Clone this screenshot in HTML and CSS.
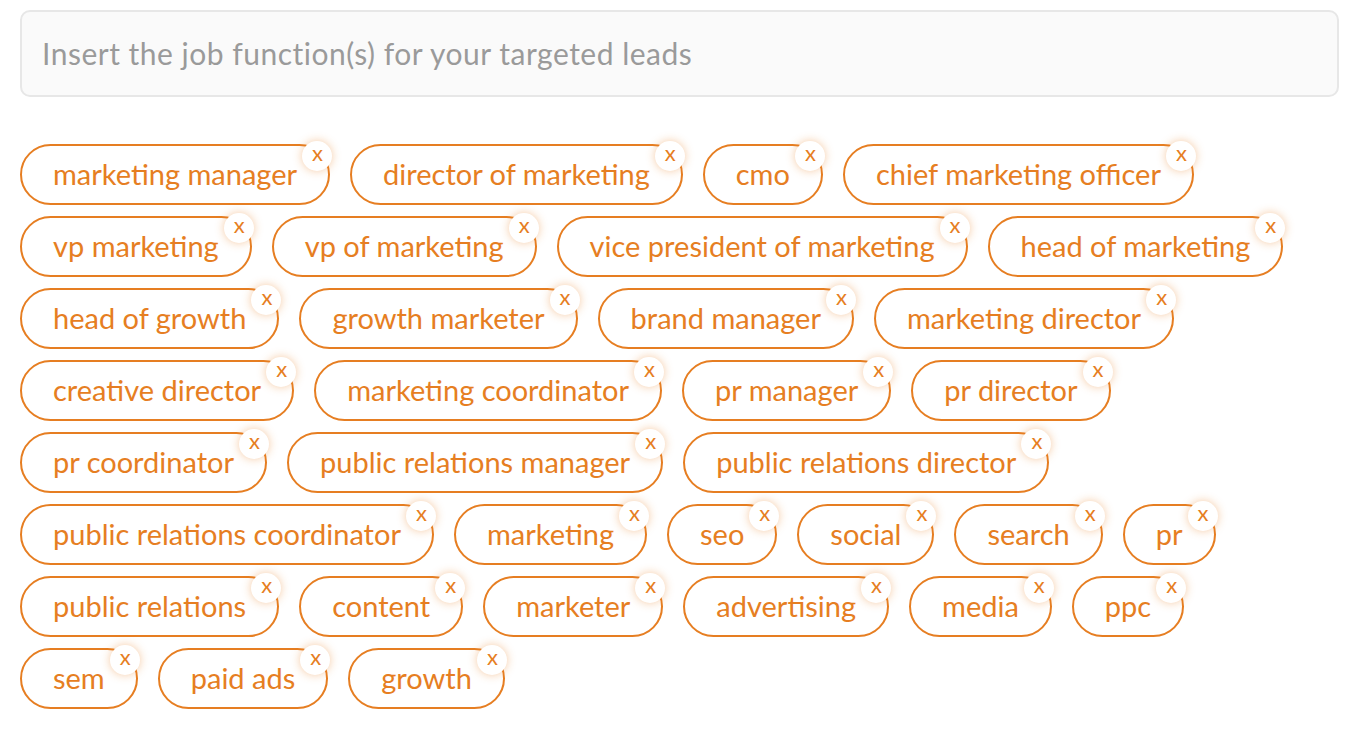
FILE: index.html
```html
<!DOCTYPE html>
<html>
<head>
<meta charset="utf-8">
<link rel="stylesheet" href="styles.css">
</head>
<body>
<div class="page">
  <div class="input">Insert the job function(s) for your targeted leads</div>
  <div class="tags">
    <div class="row">
      <span class="tag">marketing manager<span class="x">x</span></span>
      <span class="tag">director of marketing<span class="x">x</span></span>
      <span class="tag">cmo<span class="x">x</span></span>
      <span class="tag">chief marketing officer<span class="x">x</span></span>
    </div>
    <div class="row">
      <span class="tag">vp marketing<span class="x">x</span></span>
      <span class="tag">vp of marketing<span class="x">x</span></span>
      <span class="tag">vice president of marketing<span class="x">x</span></span>
      <span class="tag">head of marketing<span class="x">x</span></span>
    </div>
    <div class="row">
      <span class="tag">head of growth<span class="x">x</span></span>
      <span class="tag">growth marketer<span class="x">x</span></span>
      <span class="tag">brand manager<span class="x">x</span></span>
      <span class="tag">marketing director<span class="x">x</span></span>
    </div>
    <div class="row">
      <span class="tag">creative director<span class="x">x</span></span>
      <span class="tag">marketing coordinator<span class="x">x</span></span>
      <span class="tag">pr manager<span class="x">x</span></span>
      <span class="tag">pr director<span class="x">x</span></span>
    </div>
    <div class="row">
      <span class="tag">pr coordinator<span class="x">x</span></span>
      <span class="tag">public relations manager<span class="x">x</span></span>
      <span class="tag">public relations director<span class="x">x</span></span>
    </div>
    <div class="row">
      <span class="tag">public relations coordinator<span class="x">x</span></span>
      <span class="tag">marketing<span class="x">x</span></span>
      <span class="tag">seo<span class="x">x</span></span>
      <span class="tag">social<span class="x">x</span></span>
      <span class="tag">search<span class="x">x</span></span>
      <span class="tag">pr<span class="x">x</span></span>
    </div>
    <div class="row">
      <span class="tag">public relations<span class="x">x</span></span>
      <span class="tag">content<span class="x">x</span></span>
      <span class="tag">marketer<span class="x">x</span></span>
      <span class="tag">advertising<span class="x">x</span></span>
      <span class="tag">media<span class="x">x</span></span>
      <span class="tag">ppc<span class="x">x</span></span>
    </div>
    <div class="row">
      <span class="tag">sem<span class="x">x</span></span>
      <span class="tag">paid ads<span class="x">x</span></span>
      <span class="tag">growth<span class="x">x</span></span>
    </div>
  </div>
</div>
</body>
</html>
```
FILE: styles.css
```css
html, body {
  margin: 0;
  padding: 0;
  background: #ffffff;
}
body {
  font-family: Lato, "Open Sans", "Liberation Sans", sans-serif;
}
.page {
  padding: 10px 27px 0 20px;
}
.input {
  box-sizing: border-box;
  height: 87px;
  border: 2px solid #e7e7e7;
  border-radius: 10px;
  background: #fafafa;
  color: #9a9a9a;
  font-size: 30px;
  display: flex;
  align-items: center;
  padding: 0 20px 2px 20px;
  letter-spacing: 0.5px;
}
.tags {
  margin-top: 47px;
  display: flex;
  flex-direction: column;
  gap: 11px;
}
.row {
  display: flex;
  gap: 20px;
}
.tag {
  position: relative;
  box-sizing: border-box;
  height: 61px;
  display: inline-flex;
  align-items: center;
  padding: 0 31px 2px 31px;
  border: 2px solid #e67e22;
  border-radius: 31px;
  color: #e67e22;
  font-size: 29px;
  white-space: nowrap;
}
.x {
  position: absolute;
  top: -5px;
  right: -4px;
  width: 30px;
  height: 30px;
  border-radius: 50%;
  background: #ffffff;
  box-shadow: 0 0 10px rgba(230, 126, 34, 0.42);
  color: #e67e22;
  font-size: 22px;
  line-height: 24px;
  text-align: center;
  padding-left: 1px;
  box-sizing: border-box;
}
```
